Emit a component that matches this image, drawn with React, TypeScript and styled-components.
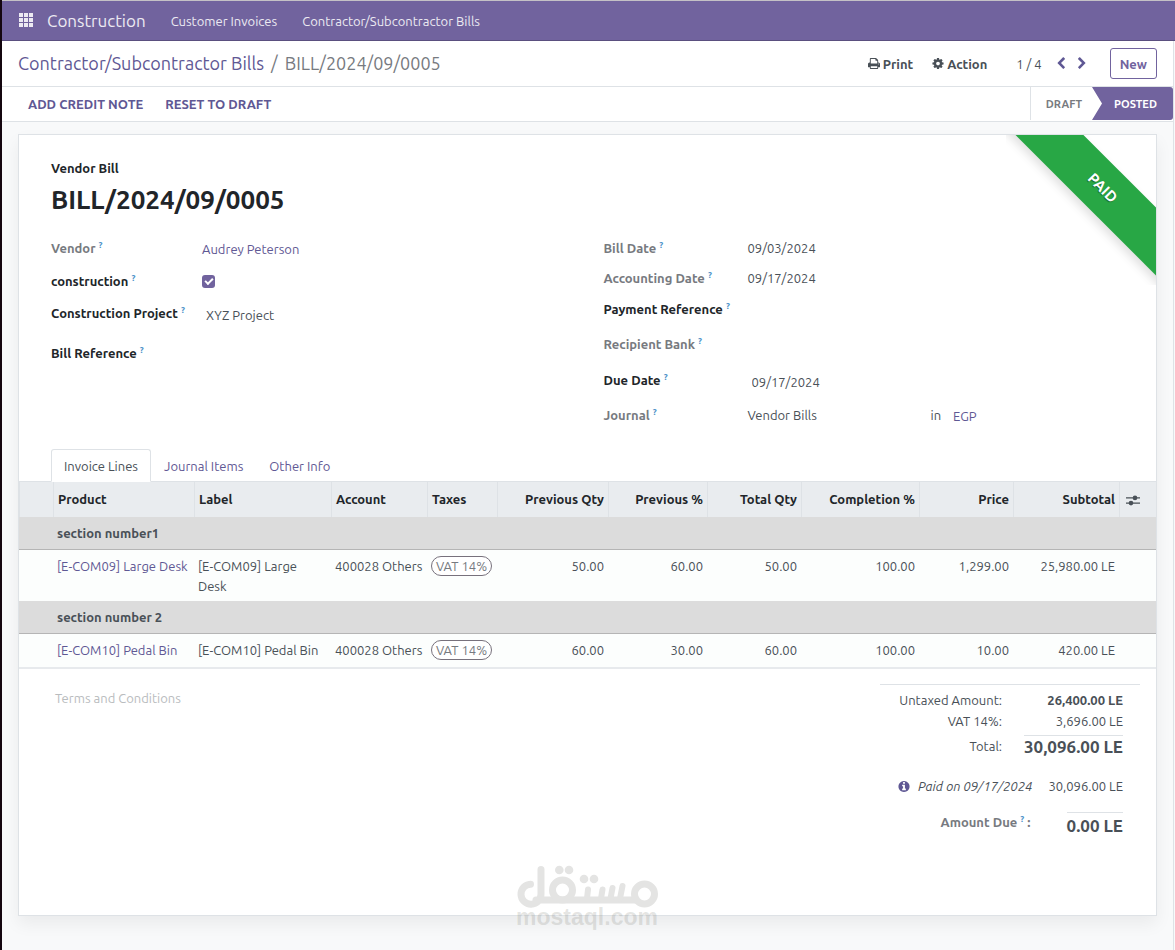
import React from "react";
import styled, { createGlobalStyle, css } from "styled-components";

const c = {
  brand: "#71639e",
  link: "#5f5894",
  text: "#495057",
  strong: "#212529",
  muted: "#777a80",
  border: "#dee2e6",
  bg: "#f8f9fa",
};

const Global = createGlobalStyle`
  * { box-sizing: border-box; }
  body {
    margin: 0;
    background: ${c.bg};
    color: ${c.text};
    font: 400 13px/20px Ubuntu, "Open Sans", sans-serif;
  }
  button, input, textarea { font: inherit; color: inherit; }
  button { background: none; border: 0; padding: 0; cursor: pointer; }
  a { color: ${c.link}; text-decoration: none; }
`;

const Shell = styled.div`
  position: relative;
  min-height: 100vh;
  display: flex;
  flex-direction: column;
  border-left: 2px solid #14060f;
`;

const Navbar = styled.nav`
  display: flex;
  align-items: center;
  height: 41px;
  padding: 0 17px;
  background: ${c.brand};
  border-top: 1px solid #c4c1c6;
  border-bottom: 1px solid #5a4f7f;
  a { color: #eceaf2; }
`;
const AppsButton = styled.button`
  display: flex;
  margin-right: 13px;
`;
const Brand = styled.a`
  font-size: 17px;
  margin-right: 25px;
`;
const NavLink = styled.a`
  margin-right: 25px;
`;

const Body = styled.div`
  flex: 1;
  display: flex;
  flex-direction: column;
  margin-right: 1px;
  border-right: 1px solid ${c.border};
`;

const ControlPanel = styled.header`
  display: flex;
  align-items: center;
  justify-content: space-between;
  height: 46px;
  padding: 0 16px;
  background: #fff;
  border-bottom: 1px solid ${c.border};
`;
const Breadcrumb = styled.div`
  display: flex;
  gap: 7px;
  padding-bottom: 2px;
  font-size: 18px;
  color: ${c.muted};
`;
const Actions = styled.div`
  display: flex;
  align-items: center;
`;
const MenuButton = styled.button`
  display: flex;
  align-items: center;
  gap: 3px;
  margin-right: 19px;
  font-weight: 600;
`;
const Pager = styled.div`
  display: flex;
  align-items: center;
  gap: 9px;
  margin: 0 22px 0 10px;
  span { margin-right: 4px; }
  button { display: flex; color: ${c.link}; }
`;
const NewButton = styled.button`
  height: 31px;
  padding: 0 9px;
  border: 1px solid ${c.brand};
  border-radius: 3px;
  color: ${c.brand};
  font-weight: 600;
`;

const StatusBar = styled.div`
  display: flex;
  justify-content: space-between;
  height: 35px;
  padding-left: 26px;
  background: #fff;
  border-bottom: 1px solid ${c.border};
`;
const StatusActions = styled.div`
  display: flex;
  gap: 22px;
  button { color: ${c.link}; font-weight: 600; }
`;
const Stages = styled.div`
  display: flex;
  height: 33px;
  font-size: 11px;
  font-weight: 600;
  border-left: 1px solid ${c.border};
`;
const Stage = styled.button<{ $active?: boolean }>`
  width: ${(p) => (p.$active ? 81 : 61)}px;
  padding-left: ${(p) => (p.$active ? 6 : 5)}px;
  color: ${c.muted};
  ${(p) =>
    p.$active &&
    css`
      color: #fff;
      background: ${c.brand};
      border-radius: 0 3px 3px 0;
      clip-path: polygon(0 0, 100% 0, 100% 100%, 0 100%, 10px 50%);
    `}
`;

const Sheet = styled.main`
  position: relative;
  flex: 1;
  margin: 12px 16px 34px;
  background: #fff;
  border: 1px solid ${c.border};
  box-shadow: 0 8px 16px rgba(0, 0, 0, 0.06);
`;
const RibbonBox = styled.div`
  position: absolute;
  top: 0;
  right: 0;
  width: 150px;
  height: 150px;
  overflow: hidden;
`;
const Ribbon = styled.span`
  position: absolute;
  top: 29px;
  left: -16px;
  width: 225px;
  padding: 14px 0;
  transform: rotate(45deg);
  background: #28a745;
  color: #fff;
  font-size: 15px;
  font-weight: 700;
  text-align: center;
  text-shadow: 0 1px 1px rgba(0, 0, 0, 0.4);
  box-shadow: 0 5px 10px rgba(0, 0, 0, 0.12);
`;

const Heading = styled.div`
  padding: 23px 32px 0;
  color: ${c.strong};
  font-weight: 600;
  h1 {
    margin: 6px 0 0;
    font-size: 26px;
    line-height: 32px;
    font-weight: 600;
  }
`;

const Groups = styled.div`
  display: grid;
  grid-template-columns: 1fr 1fr;
  column-gap: 32px;
  padding: 22px 32px 0;
  min-height: 233px;
`;
const Group = styled.div`
  display: flex;
  flex-direction: column;
`;
const Field = styled.div<{ $h: number; $label: number }>`
  display: grid;
  grid-template-columns: ${(p) => p.$label}px 1fr;
  height: ${(p) => p.$h}px;
  a { padding-top: 1px; }
`;
const FieldLabel = styled.label<{ $muted?: boolean }>`
  font-weight: 600;
  color: ${(p) => (p.$muted ? c.muted : c.strong)};
`;
const Help = styled.sup`
  font-size: 9px;
  line-height: 0;
  font-weight: 600;
  color: #4a90c8;
`;
const TextInput = styled.input`
  width: 100%;
  height: 24px;
  padding: 0 4px;
  border: 0;
  outline: 0;
  background: transparent;
`;
const Check = styled.input`
  appearance: none;
  width: 13px;
  height: 13px;
  margin: 4px 0 0;
  border-radius: 3px;
  background: ${c.brand};
  display: grid;
  place-items: center;
  &::after {
    content: "";
    width: 6px;
    height: 3px;
    margin-bottom: 2px;
    border: solid #fff;
    border-width: 0 0 2px 2px;
    transform: rotate(-45deg);
  }
`;
const JournalValue = styled.div`
  display: flex;
  span:first-child { width: 183px; }
  a { margin-left: 12px; }
`;

const Tabs = styled.div`
  display: flex;
  height: 33px;
  padding-left: 32px;
  margin-bottom: -1px;
  position: relative;
`;
const Tab = styled.button<{ $active?: boolean }>`
  padding: 0 12px;
  border: 1px solid transparent;
  color: ${(p) => (p.$active ? c.text : c.link)};
  ${(p) =>
    p.$active &&
    css`
      background: #fff;
      border-color: ${c.border} ${c.border} #fff;
      border-radius: 3px 3px 0 0;
    `}
`;

const Lines = styled.table`
  width: 100%;
  table-layout: fixed;
  border-collapse: separate;
  border-spacing: 0;
  border-top: 1px solid ${c.border};
  border-bottom: 2px solid #e7eaed;
`;
const Th = styled.th<{ $num?: boolean }>`
  height: 35px;
  padding: 0 4px 2px;
  background: #e9ecef;
  border-left: 1px solid ${c.border};
  color: ${c.strong};
  font-weight: 600;
  white-space: nowrap;
  text-align: ${(p) => (p.$num ? "right" : "left")};
  button { display: flex; margin: 2px 0 0 2px; }
`;
const SectionRow = styled.tr`
  td {
    height: 33px;
    padding: 0 4px;
    background: #dcdcdc;
    border-bottom: 1px solid #b5b5b5;
    font-weight: 700;
  }
`;
const Td = styled.td<{ $num?: boolean }>`
  padding: 6px 4px 4px;
  vertical-align: top;
  background: #fcfefd;
  text-align: ${(p) => (p.$num ? "right" : "left")};
`;
const LineRow = styled.tr<{ $h: number }>`
  height: ${(p) => p.$h}px;
  td:nth-child(2), td:nth-child(4), td:nth-child(5) { white-space: nowrap; }
`;
const Tax = styled.span`
  display: inline-block;
  height: 20px;
  line-height: 18px;
  padding: 0 4px;
  border: 1px solid #77717c;
  border-radius: 10px;
  background: #fff;
  color: ${c.muted};
`;

const Footer = styled.div`
  display: flex;
  justify-content: space-between;
  padding: 15px 16px 72px 32px;
`;
const Terms = styled.textarea`
  width: 400px;
  height: 40px;
  padding: 4px;
  border: 0;
  outline: 0;
  resize: none;
  background: transparent;
  &::placeholder { color: #b9bcbe; opacity: 1; }
`;
const Totals = styled.div`
  display: flex;
  flex-direction: column;
  align-items: flex-end;
  width: 260px;
  padding: 5px 17px 0 0;
  border-top: 1px solid ${c.border};
`;
const TotalRow = styled.div`
  display: flex;
  justify-content: flex-end;
  line-height: 21px;
`;
const TotalLabel = styled.span`
  margin-right: 22px;
`;
const Amount = styled.span<{ $bold?: boolean }>`
  width: 99px;
  text-align: right;
  white-space: nowrap;
  font-weight: ${(p) => (p.$bold ? 700 : 400)};
`;
const BigAmount = styled(Amount)`
  width: auto;
  min-width: 56px;
  border-top: 1px solid ${c.border};
  font-size: 17px;
  font-weight: 600;
`;
const GrandRow = styled(TotalRow)`
  margin-top: 3px;
  ${TotalLabel} { padding-top: 1px; }
`;
const PaidRow = styled(TotalRow)`
  align-items: center;
  margin-top: 19px;
  svg { color: ${c.link}; margin-right: 8px; }
  em { margin-right: 16px; }
`;
const DueRow = styled(TotalRow)`
  margin-top: 15px;
  line-height: 26px;
  ${FieldLabel} { line-height: 20px; margin-right: 36px; }
`;

const Watermark = styled.div`
  position: absolute;
  bottom: 26px;
  left: 0;
  right: 3px;
  display: flex;
  flex-direction: column;
  align-items: center;
  color: rgba(120, 120, 110, 0.2);
  font: 700 23px/13px "Liberation Sans", sans-serif;
  pointer-events: none;
  svg { display: block; }
`;

const icons = {
  print: {
    box: 1664,
    d: "M384 1536h896v-256h-896v256zM384 896h896v-384h-160q-40 0-68-28t-28-68v-160h-640v640zM1536 960q0-26-19-45t-45-19-45 19-19 45 19 45 45 19 45-19 19-45zM1664 960v416q0 13-9.500 22.500t-22.500 9.500h-224v160q0 40-28 68t-68 28h-960q-40 0-68-28t-28-68v-160h-224q-13 0-22.500-9.500t-9.500-22.500v-416q0-79 56.500-135.500t135.500-56.500h64v-544q0-40 28-68t68-28h672q40 0 88 20t76 48l152 152q28 28 48 76t20 88v256h64q79 0 135.500 56.500t56.500 135.500z",
  },
  cog: {
    box: 1536,
    d: "M1024 896q0-106-75-181t-181-75-181 75-75 181 75 181 181 75 181-75 75-181zm512-109v222q0 12-8 23t-20 13l-185 28q-19 54-39 91 35 50 107 138 10 12 10 25t-9 23q-27 37-99 108t-94 71q-12 0-26-9l-138-108q-44 23-91 38-16 136-29 186-7 28-36 28h-222q-14 0-24.500-8.500t-11.500-21.500l-28-184q-49-16-90-37l-141 107q-10 9-25 9-14 0-25-11-126-114-165-168-7-10-7-23 0-12 8-23 15-21 51-66.500t54-70.500q-27-50-41-99l-183-27q-13-2-21-12.500t-8-23.500v-222q0-12 8-23t19-13l186-28q14-46 39-92-40-57-107-138-10-12-10-24 0-10 9-23 26-36 98.500-107.500t94.500-71.500q13 0 26 10l138 107q44-23 91-38 16-136 29-186 7-28 36-28h222q14 0 24.500 8.500t11.500 21.500l28 184q49 16 90 37l142-107q9-9 24-9 13 0 25 10 129 119 165 170 7 8 7 22 0 12-8 23-15 21-51 66.500t-54 70.500q26 50 41 98l183 28q13 2 21 12.500t8 23.500z",
  },
  left: {
    box: 1280,
    d: "M1171 301l-531 531 531 531q19 19 19 45t-19 45l-166 166q-19 19-45 19t-45-19l-742-742q-19-19-19-45t19-45l742-742q19-19 45-19t45 19l166 166q19 19 19 45t-19 45z",
  },
  right: {
    box: 1280,
    d: "M1107 877l-742 742q-19 19-45 19t-45-19l-166-166q-19-19-19-45t19-45l531-531-531-531q-19-19-19-45t19-45l166-166q19-19 45-19t45 19l742 742q19 19 19 45t-19 45z",
  },
  info: {
    box: 1536,
    d: "M1024 1376v-160q0-14-9-23t-23-9h-96v-512q0-14-9-23t-23-9h-320q-14 0-23 9t-9 23v160q0 14 9 23t23 9h96v320h-96q-14 0-23 9t-9 23v160q0 14 9 23t23 9h448q14 0 23-9t9-23zm-128-896v-160q0-14-9-23t-23-9h-192q-14 0-23 9t-9 23v160q0 14 9 23t23 9h192q14 0 23-9t9-23zm640 416q0 209-103 385.500t-279.500 279.500-385.500 103-385.500-103-279.500-279.500-103-385.500 103-385.500 279.500-279.500 385.500-103 385.500 103 279.500 279.500 103 385.500z",
  },
};
const Icon = ({ name }: { name: keyof typeof icons }) => (
  <svg width="12" height="13" viewBox={`0 0 ${icons[name].box} 1792`} fill="currentColor">
    <path d={icons[name].d} />
  </svg>
);
const AppsIcon = () => (
  <svg width="15" height="15" viewBox="0 0 15 15" fill="#eceaf2">
    {[0, 5, 10].map((y) => [0, 5, 10].map((x) => <rect key={`${x}-${y}`} x={x} y={y} width="4" height="4" />))}
  </svg>
);
const SlidersIcon = () => (
  <svg width="14" height="12" viewBox="0 0 14 12" fill={c.text}>
    <path d="M0 3.2h14v1.4H0zM0 8.4h14v1.4H0z" />
    <circle cx="9" cy="3.9" r="2.3" />
    <circle cx="5" cy="9.1" r="2.3" />
  </svg>
);
const LogoMark = () => (
  <svg width="142" height="46" viewBox="0 0 142 46" fill="none" stroke="#e4e4e3" strokeWidth="7" strokeLinecap="round">
    <path d="M14.500 19.200A10 10 0 1 0 25 29V4.500M20 35H120" />
    <circle cx="46.500" cy="25" r="10" />
    <circle cx="128.500" cy="29" r="10" />
    <path strokeWidth="6" d="M72 24.500l-1 9M86.500 24.500l-1.500 9M96.500 23l-2 10.500M106.500 21l-2.500 12.500" />
    <g fill="#e4e4e3" stroke="none">
      <circle cx="43.300" cy="5" r="4.300" />
      <circle cx="53" cy="5" r="4.300" />
      <circle cx="68" cy="14" r="4.300" />
      <circle cx="78" cy="14" r="4.300" />
    </g>
  </svg>
);

type LabelProps = { id: string; text: string; muted?: boolean };
const Label = ({ id, text, muted }: LabelProps) => (
  <FieldLabel htmlFor={id} $muted={muted}>
    {text} <Help>?</Help>
  </FieldLabel>
);

const widths = [34, 141, 137, 96, 70, 111, 99, 94, 118, 94, 106, 37];
const textHeads = ["Product", "Label", "Account", "Taxes"];
const numHeads = ["Previous Qty", "Previous %", "Total Qty", "Completion %", "Price", "Subtotal"];
const sections = [
  {
    title: "section number1",
    h: 51,
    product: "[E-COM09] Large Desk",
    nums: ["50.00", "60.00", "50.00", "100.00", "1,299.00", "25,980.00 LE"],
  },
  {
    title: "section number 2",
    h: 33,
    product: "[E-COM10] Pedal Bin",
    nums: ["60.00", "30.00", "60.00", "100.00", "10.00", "420.00 LE"],
  },
];

export default function App() {
  return (
    <Shell>
      <Global />
      <Navbar>
        <AppsButton aria-label="Apps"><AppsIcon /></AppsButton>
        <Brand href="#">Construction</Brand>
        <NavLink href="#">Customer Invoices</NavLink>
        <NavLink href="#">Contractor/Subcontractor Bills</NavLink>
      </Navbar>
      <Body>
        <ControlPanel>
          <Breadcrumb>
            <a href="#">Contractor/Subcontractor Bills</a>
            <span>/</span>
            <span>BILL/2024/09/0005</span>
          </Breadcrumb>
          <Actions>
            <MenuButton><Icon name="print" />Print</MenuButton>
            <MenuButton><Icon name="cog" />Action</MenuButton>
            <Pager>
              <span>1 / 4</span>
              <button aria-label="Previous"><Icon name="left" /></button>
              <button aria-label="Next"><Icon name="right" /></button>
            </Pager>
            <NewButton>New</NewButton>
          </Actions>
        </ControlPanel>
        <StatusBar>
          <StatusActions>
            <button>ADD CREDIT NOTE</button>
            <button>RESET TO DRAFT</button>
          </StatusActions>
          <Stages>
            <Stage>DRAFT</Stage>
            <Stage $active>POSTED</Stage>
          </Stages>
        </StatusBar>
        <Sheet>
          <RibbonBox><Ribbon>PAID</Ribbon></RibbonBox>
          <Heading>
            <div>Vendor Bill</div>
            <h1>BILL/2024/09/0005</h1>
          </Heading>
          <Groups>
            <Group>
              <Field $h={33} $label={151}>
                <Label id="vendor" text="Vendor" muted />
                <a id="vendor" href="#">Audrey Peterson</a>
              </Field>
              <Field $h={32} $label={151}>
                <Label id="construction" text="construction" />
                <Check id="construction" type="checkbox" defaultChecked />
              </Field>
              <Field $h={40} $label={151}>
                <Label id="project" text="Construction Project" />
                <TextInput id="project" defaultValue="XYZ Project" />
              </Field>
              <Field $h={30} $label={151}>
                <Label id="reference" text="Bill Reference" />
                <TextInput id="reference" />
              </Field>
            </Group>
            <Group>
              <Field $h={30} $label={144}>
                <Label id="bill-date" text="Bill Date" muted />
                <span id="bill-date">09/03/2024</span>
              </Field>
              <Field $h={31} $label={144}>
                <Label id="acc-date" text="Accounting Date" muted />
                <span id="acc-date">09/17/2024</span>
              </Field>
              <Field $h={35} $label={144}>
                <Label id="payment" text="Payment Reference" />
                <TextInput id="payment" />
              </Field>
              <Field $h={36} $label={144}>
                <Label id="bank" text="Recipient Bank" muted />
                <span id="bank" />
              </Field>
              <Field $h={35} $label={144}>
                <Label id="due" text="Due Date" />
                <TextInput id="due" defaultValue="09/17/2024" />
              </Field>
              <Field $h={30} $label={144}>
                <Label id="journal" text="Journal" muted />
                <JournalValue id="journal">
                  <span>Vendor Bills</span>
                  <span>in</span>
                  <a href="#">EGP</a>
                </JournalValue>
              </Field>
            </Group>
          </Groups>
          <Tabs role="tablist">
            <Tab role="tab" aria-selected $active>Invoice Lines</Tab>
            <Tab role="tab">Journal Items</Tab>
            <Tab role="tab">Other Info</Tab>
          </Tabs>
          <Lines>
            <colgroup>{widths.map((w, i) => <col key={i} width={w} />)}</colgroup>
            <thead>
              <tr>
                <Th />
                {textHeads.map((t) => <Th key={t}>{t}</Th>)}
                {numHeads.map((t) => <Th key={t} $num>{t}</Th>)}
                <Th><button aria-label="Optional columns"><SlidersIcon /></button></Th>
              </tr>
            </thead>
            <tbody>
              {sections.map((s) => (
                <React.Fragment key={s.title}>
                  <SectionRow>
                    <td />
                    <td colSpan={11}>{s.title}</td>
                  </SectionRow>
                  <LineRow $h={s.h}>
                    <Td />
                    <Td><a href="#">{s.product}</a></Td>
                    <Td>{s.product}</Td>
                    <Td>400028 Others</Td>
                    <Td><Tax>VAT 14%</Tax></Td>
                    {s.nums.map((n, i) => <Td key={i} $num>{n}</Td>)}
                    <Td />
                  </LineRow>
                </React.Fragment>
              ))}
            </tbody>
          </Lines>
          <Footer>
            <Terms placeholder="Terms and Conditions" aria-label="Terms and Conditions" />
            <Totals>
              <TotalRow>
                <TotalLabel>Untaxed Amount:</TotalLabel>
                <Amount $bold>26,400.00 LE</Amount>
              </TotalRow>
              <TotalRow>
                <TotalLabel>VAT 14%:</TotalLabel>
                <Amount>3,696.00 LE</Amount>
              </TotalRow>
              <GrandRow>
                <TotalLabel>Total:</TotalLabel>
                <BigAmount>30,096.00 LE</BigAmount>
              </GrandRow>
              <PaidRow>
                <Icon name="info" />
                <em>Paid on 09/17/2024</em>
                <span>30,096.00 LE</span>
              </PaidRow>
              <DueRow>
                <FieldLabel as="span" $muted>Amount Due <Help>?</Help> :</FieldLabel>
                <BigAmount>0.00 LE</BigAmount>
              </DueRow>
            </Totals>
          </Footer>
        </Sheet>
      </Body>
      <Watermark>
        <LogoMark />
        <span>mostaql.com</span>
      </Watermark>
    </Shell>
  );
}
